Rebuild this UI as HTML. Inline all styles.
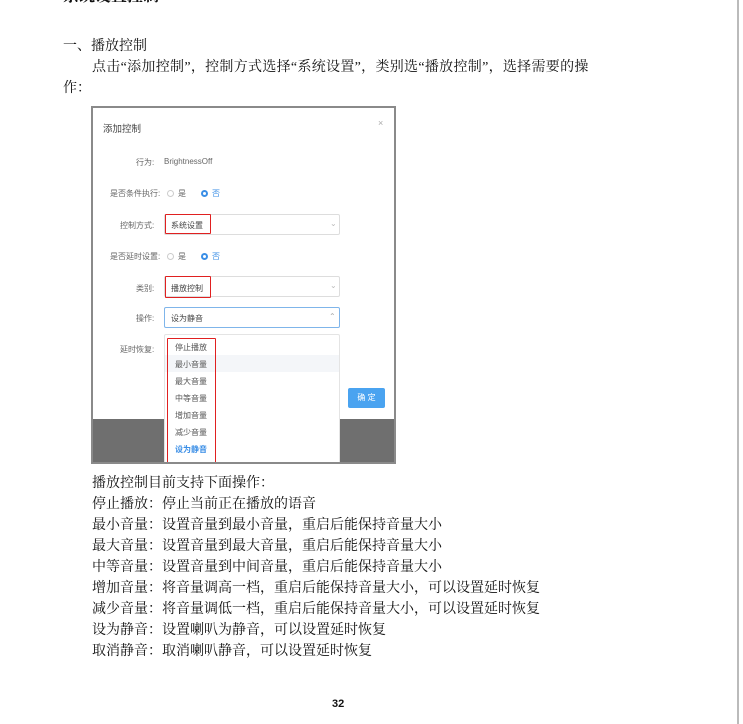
<!DOCTYPE html>
<html><head><meta charset="utf-8"><style>
*{margin:0;padding:0;box-sizing:border-box}
body{width:743px;height:724px;background:#fff;position:relative;overflow:hidden;font-family:"Liberation Serif","Noto Serif CJK SC",serif;color:#111}
.t{position:absolute;font-size:14px;line-height:21px;white-space:nowrap;letter-spacing:0}
.vr{position:absolute;left:737px;top:0;width:2px;height:724px;background:#bbb}
.shot{position:absolute;left:91px;top:106px;width:305px;height:358px;border:2px solid #8a8a8a;background:#6f6f6f;overflow:hidden;font-family:"Liberation Sans","Noto Sans CJK SC",sans-serif}
.dlg{position:absolute;left:0;top:0;width:301px;height:311px;background:#fff}
.s{position:absolute;font-size:8px;color:#666;white-space:nowrap}
.inp{position:absolute;left:71px;width:176px;height:21px;border:1px solid #ddd;border-radius:2px;background:#fff}
.red{position:absolute;border:1.5px solid #e02020;border-radius:1px}
.rad{position:absolute;width:7px;height:7px;border-radius:50%;border:1px solid #ccc}
.radon{border:2px solid #3a8ee6;background:#fff}
.dd{position:absolute;left:71px;top:226px;width:176px;height:140px;background:#fff;border:1px solid #e4e4e4;border-radius:2px}
.it{position:absolute;left:10px;font-size:8px;color:#555}
</style></head><body>
<div class="vr"></div>
<div class="t" style="left:63px;top:-14px;font-weight:bold;font-size:16px">系统设置控制</div>
<div class="t" style="left:63px;top:36px">一、播放控制</div>
<div class="t" style="left:92px;top:57px;letter-spacing:0.3px">点击“添加控制”，控制方式选择“系统设置”，类别选“播放控制”，选择需要的操</div>
<div class="t" style="left:63px;top:78px">作：</div>

<div class="shot">
 <div class="dlg">
  <div class="s" style="left:10px;top:13px;font-size:9.5px;color:#444">添加控制</div>
  <div class="s" style="left:285px;top:10px;font-size:9px;color:#aaa">×</div>
  <div class="s" style="left:43px;top:49px">行为:</div>
  <div class="s" style="left:71px;top:49px">BrightnessOff</div>
  <div class="s" style="left:17px;top:80px">是否条件执行:</div>
  <div class="rad" style="left:74px;top:82px"></div><div class="s" style="left:85px;top:80px">是</div>
  <div class="rad radon" style="left:108px;top:82px"></div><div class="s" style="left:119px;top:80px;color:#3a8ee6">否</div>
  <div class="s" style="left:27px;top:112px">控制方式:</div>
  <div class="inp" style="top:106px"></div>
  <div class="s" style="left:78px;top:112px;color:#444">系统设置</div>
  <div class="red" style="left:72px;top:106px;width:46px;height:20px"></div>
  <div class="s" style="left:237px;top:111px;color:#bbb">⌄</div>
  <div class="s" style="left:17px;top:143px">是否延时设置:</div>
  <div class="rad" style="left:74px;top:145px"></div><div class="s" style="left:85px;top:143px">是</div>
  <div class="rad radon" style="left:108px;top:145px"></div><div class="s" style="left:119px;top:143px;color:#3a8ee6">否</div>
  <div class="s" style="left:43px;top:175px">类别:</div>
  <div class="inp" style="top:168px"></div>
  <div class="s" style="left:78px;top:175px;color:#444">播放控制</div>
  <div class="red" style="left:72px;top:168px;width:46px;height:22px"></div>
  <div class="s" style="left:237px;top:173px;color:#bbb">⌄</div>
  <div class="s" style="left:43px;top:205px">操作:</div>
  <div class="inp" style="top:199px;border-color:#7fb5ea"></div>
  <div class="s" style="left:78px;top:205px;color:#444">设为静音</div>
  <div class="s" style="left:236px;top:204px;color:#aaa">⌃</div>
  <div class="s" style="left:27px;top:236px">延时恢复:</div>
  <div style="position:absolute;left:255px;top:280px;width:37px;height:20px;background:#4aa3f0;border-radius:2px;color:#fff;font-size:8px;text-align:center;line-height:20px">确 定</div>
 </div>
 <div class="dd">
  <div style="position:absolute;left:0;top:20px;width:174px;height:17px;background:#f4f6f9"></div>
  <div class="it" style="top:7px">停止播放</div>
  <div class="it" style="top:24px">最小音量</div>
  <div class="it" style="top:41px">最大音量</div>
  <div class="it" style="top:58px">中等音量</div>
  <div class="it" style="top:75px">增加音量</div>
  <div class="it" style="top:92px">减少音量</div>
  <div class="it" style="top:109px;color:#3a8ee6;font-weight:bold">设为静音</div>
  <div class="red" style="left:2px;top:3px;width:49px;height:126px"></div>
 </div>
</div>

<div class="t" style="left:92px;top:473px">播放控制目前支持下面操作：</div>
<div class="t" style="left:92px;top:494px">停止播放：停止当前正在播放的语音</div>
<div class="t" style="left:92px;top:515px">最小音量：设置音量到最小音量，重启后能保持音量大小</div>
<div class="t" style="left:92px;top:536px">最大音量：设置音量到最大音量，重启后能保持音量大小</div>
<div class="t" style="left:92px;top:557px">中等音量：设置音量到中间音量，重启后能保持音量大小</div>
<div class="t" style="left:92px;top:578px">增加音量：将音量调高一档，重启后能保持音量大小，可以设置延时恢复</div>
<div class="t" style="left:92px;top:599px">减少音量：将音量调低一档，重启后能保持音量大小，可以设置延时恢复</div>
<div class="t" style="left:92px;top:620px">设为静音：设置喇叭为静音，可以设置延时恢复</div>
<div class="t" style="left:92px;top:641px">取消静音：取消喇叭静音，可以设置延时恢复</div>
<div class="t" style="left:332px;top:694px;font-size:11px;font-weight:bold;font-family:'Liberation Sans',sans-serif">32</div>
</body></html>
